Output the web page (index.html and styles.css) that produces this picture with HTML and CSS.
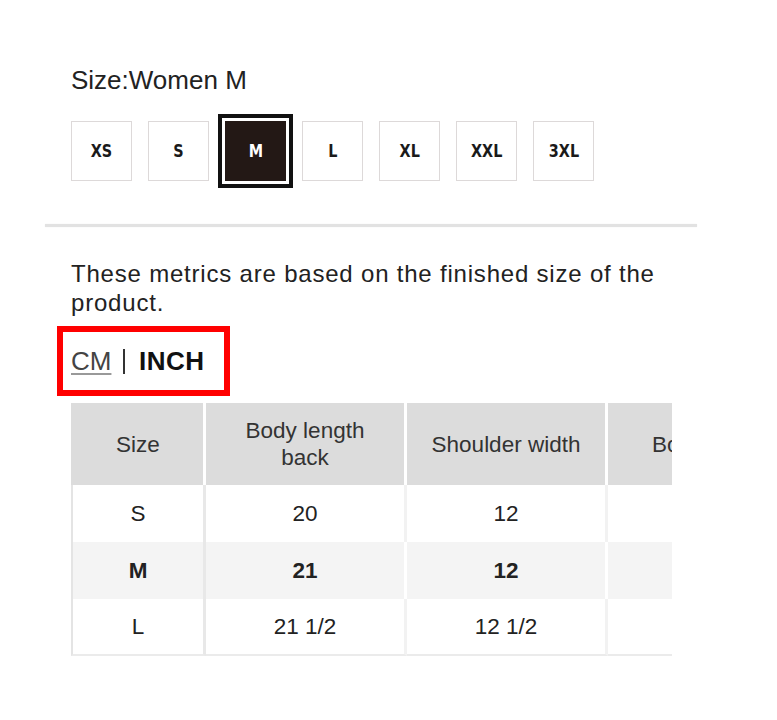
FILE: index.html
```html
<!DOCTYPE html>
<html lang="en">
<head>
<meta charset="utf-8">
<title>Size</title>
<link rel="stylesheet" href="styles.css">
</head>
<body>
<div class="page">
  <section class="size-section">
    <h2 class="size-title">Size:Women M</h2>
    <ul class="size-list">
      <li class="size-box"><span class="size-label">XS</span></li>
      <li class="size-box"><span class="size-label">S</span></li>
      <li class="size-box is-selected"><span class="size-label">M</span></li>
      <li class="size-box"><span class="size-label">L</span></li>
      <li class="size-box"><span class="size-label">XL</span></li>
      <li class="size-box"><span class="size-label">XXL</span></li>
      <li class="size-box"><span class="size-label">3XL</span></li>
    </ul>
  </section>
  <hr class="divider">
  <section class="metrics">
    <p class="metrics-note">These metrics are based on the finished size of the product.</p>
    <div class="unit-toggle">
      <span class="unit unit-cm">CM</span>
      <span class="unit-sep"></span>
      <span class="unit unit-inch">INCH</span>
    </div>
    <div class="table-wrap">
      <table class="size-table">
        <thead>
          <tr>
            <th class="col-size">Size</th>
            <th class="col">Body length back</th>
            <th class="col">Shoulder width</th>
            <th class="col">Body width</th>
          </tr>
        </thead>
        <tbody>
          <tr>
            <td>S</td><td>20</td><td>12</td><td>17</td>
          </tr>
          <tr class="is-current">
            <td>M</td><td>21</td><td>12</td><td>18</td>
          </tr>
          <tr>
            <td>L</td><td>21 1/2</td><td>12 1/2</td><td>19</td>
          </tr>
        </tbody>
      </table>
    </div>
  </section>
</div>
</body>
</html>
```
FILE: styles.css
```css
html, body {
  margin: 0;
  padding: 0;
  background: #fff;
}

body {
  font-family: "Liberation Sans", Arial, sans-serif;
  color: #222;
}

.page {
  width: 652px;
  padding: 65px 0 40px 45px;
}

.size-section {
  padding-left: 26px;
}

.size-title {
  margin: 0;
  font-size: 26px;
  line-height: 30px;
  font-weight: normal;
  color: #222;
}

.size-list {
  list-style: none;
  margin: 26px 0 0;
  padding: 0;
  display: flex;
  gap: 16px;
}

.size-box {
  box-sizing: border-box;
  width: 61px;
  height: 60px;
  border: 1.5px solid #ddd9d9;
  display: flex;
  align-items: center;
  justify-content: center;
  font-family: "DejaVu Sans", sans-serif;
  font-weight: bold;
  font-size: 18px;
  color: #1a1a1a;
}

.size-label {
  display: inline-block;
  transform: scaleX(0.8);
  line-height: 1;
}

.size-box.is-selected {
  background: #231815;
  border-color: #231815;
  color: #fff;
  box-shadow: 0 0 0 3px #fff, 0 0 0 7px #111;
}

.divider {
  margin: 43px 0 0;
  height: 3px;
  border: 0;
  background: #e2e2e2;
  box-shadow: 0 0 1px #e2e2e2;
}

.metrics {
  padding-left: 26px;
}

.metrics-note {
  margin: 32px 0 0;
  font-size: 24px;
  line-height: 29px;
  letter-spacing: 0.8px;
  color: #222;
}

.unit-toggle {
  display: inline-flex;
  align-items: center;
  height: 58px;
  margin: 9px 0 0 -14px;
  padding: 0 19px 0 8px;
  border: 6px solid #ff0000;
}

.unit {
  font-size: 26px;
  line-height: 30px;
}

.unit-cm {
  color: #444;
  text-decoration: underline;
  text-decoration-color: #999;
  text-decoration-thickness: 1.5px;
  text-underline-offset: 3px;
}

.unit-sep {
  width: 1.5px;
  height: 25px;
  background: #333;
  margin: 0 14px 0 12px;
}

.unit-inch {
  font-weight: bold;
  letter-spacing: 0.5px;
  color: #111;
}

.table-wrap {
  width: 601px;
  margin-top: 7px;
  overflow: hidden;
}

.size-table {
  table-layout: fixed;
  width: 738px;
  border-collapse: separate;
  border-spacing: 0;
  font-size: 22.5px;
}

.size-table th,
.size-table td {
  box-sizing: border-box;
  text-align: center;
  vertical-align: middle;
  border-right: 3px solid #f2f2f2;
}

.size-table th {
  background: #dcdcdc;
  color: #333;
  font-weight: normal;
  line-height: 27px;
  padding: 14px 20px;
  height: 82px;
  border-right-color: #fff;
  width: 201px;
}

.size-table th.col-size {
  width: 135px;
}

.size-table th:first-child,
.size-table td:first-child {
  border-left: 2px solid #e4e4e4;
  border-right-color: #e8e8e8;
}

.size-table th:first-child {
  border-left-color: #dcdcdc;
  border-right-color: #fff;
}

.size-table td {
  height: 57px;
  padding: 0 10px;
  color: #222;
  line-height: 27px;
}

.size-table tr.is-current td {
  background: #f4f4f4;
  font-weight: bold;
  border-right-color: #fff;
}

.size-table tr.is-current td:first-child {
  border-right-color: #e8e8e8;
}

.size-table tbody tr:last-child td {
  border-bottom: 2px solid #ebebeb;
}
```
